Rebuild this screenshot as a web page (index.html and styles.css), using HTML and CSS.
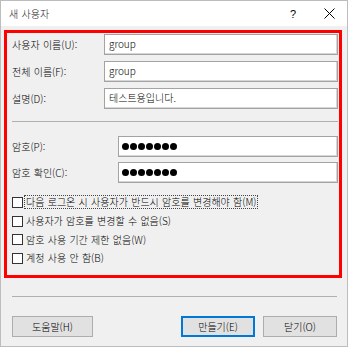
FILE: index.html
```html
<!DOCTYPE html>
<html lang="ko">
<head>
    <meta charset="UTF-8">
    <meta name="viewport" content="width=device-width, initial-scale=1.0">
    <title>새 사용자</title>
    <link rel="stylesheet" href="styles.css">
</head>
<body>
    <div class="window">
        <div class="titlebar">
            <span class="title">새 사용자</span>
            <span class="help">?</span>
            <span class="close">
                <svg width="11" height="11" viewBox="0 0 11 11">
                    <path d="M0.5 0.5 L10.5 10.5 M10.5 0.5 L0.5 10.5" stroke="#000" stroke-width="1" fill="none"/>
                </svg>
            </span>
        </div>
        <div class="body">
            <div class="panel">
                <div class="fields">
                    <label>사용자 이름(U):</label>
                    <div class="input">group</div>
                    <label>전체 이름(F):</label>
                    <div class="input">group</div>
                    <label>설명(D):</label>
                    <div class="input">테스트용입니다.</div>
                </div>
                <div class="sep"></div>
                <div class="fields pw">
                    <label>암호(P):</label>
                    <div class="input dots"><span></span><span></span><span></span><span></span><span></span><span></span><span></span></div>
                    <label>암호 확인(C):</label>
                    <div class="input dots"><span></span><span></span><span></span><span></span><span></span><span></span><span></span></div>
                </div>
                <div class="checks">
                    <div class="check"><span class="box"></span><span class="text focus">다음 로그온 시 사용자가 반드시 암호를 변경해야 함(M)</span></div>
                    <div class="check"><span class="box"></span><span class="text">사용자가 암호를 변경할 수 없음(S)</span></div>
                    <div class="check"><span class="box"></span><span class="text">암호 사용 기간 제한 없음(W)</span></div>
                    <div class="check"><span class="box"></span><span class="text">계정 사용 안 함(B)</span></div>
                </div>
            </div>
            <div class="sep bottom"></div>
            <div class="buttons">
                <button class="btn help-btn">도움말(H)</button>
                <div class="spacer"></div>
                <button class="btn default">만들기(E)</button>
                <button class="btn">닫기(O)</button>
            </div>
        </div>
    </div>
</body>
</html>
```

FILE: styles.css
```css
*{
    margin: 0;
    padding: 0;
    box-sizing: border-box;
}
body{
    background: #fff;
    font-family: "Noto Sans CJK KR", "Noto Sans", sans-serif;
    font-size: 10px;
    font-weight: 300;
    word-spacing: 0.5px;
    color: #000;
}
.window{
    width: 348px;
    height: 347px;
    border: 1px solid #bdbdbd;
    background: #f0f0f0;
}
.titlebar{
    height: 25px;
    background: #fff;
    display: flex;
    align-items: center;
    padding-left: 8px;
}
.title{
    font-size: 10px;
    color: #222;
}
.help{
    margin-left: auto;
    font-family: "Liberation Sans", sans-serif;
    font-size: 11px;
    margin-right: 28px;
}
.close{
    display: flex;
    margin-right: 12px;
}
.body{
    padding: 4px 0 0 3px;
}
.panel{
    width: 338px;
    height: 248px;
    border: 3px solid #ff0000;
    padding: 1px 1px 0 5px;
}
.fields{
    display: grid;
    grid-template-columns: 92px 1fr;
    grid-auto-rows: 21px;
    row-gap: 6px;
    align-items: center;
}
.fields.pw{
    grid-template-columns: 106px 1fr;
    row-gap: 5px;
    margin-top: 14px;
}
.input{
    height: 21px;
    background: #fff;
    border: 1px solid #a3a3a3;
    box-shadow: inset -1px -1px 0 #d6d6d6;
    padding: 0 4px;
    display: flex;
    align-items: center;
    line-height: 1;
    padding-bottom: 2px;
}
.input.dots{
    gap: 1px;
    padding: 0 3px;
}
.input.dots span{
    width: 7px;
    height: 7px;
    border-radius: 50%;
    background: #000;
}
.sep{
    height: 1px;
    background: #b0b0b0;
    margin-top: 12px;
}
.checks{
    margin-top: 10px;
}
.check{
    height: 18.7px;
    display: flex;
    align-items: center;
}
.box{
    width: 11px;
    height: 11px;
    background: #fff;
    border: 1px solid #333;
    margin-right: 1px;
}
.text{
    padding: 0 1px;
    line-height: 12px;
    border: 1px solid transparent;
}
.text.focus{
    border: 1px dotted #444;
}
.sep.bottom{
    margin: 18px 0 0 8px;
    width: 325px;
}
.buttons{
    display: flex;
    margin: 19px 0 0 8px;
    width: 325px;
    gap: 8px;
}
.spacer{
    flex: 1;
}
.btn{
    width: 74px;
    height: 21px;
    background: #e1e1e1;
    border: 1px solid #adadad;
    font-family: "Noto Sans CJK KR", "Noto Sans", sans-serif;
    font-size: 10px;
    font-weight: 300;
    color: #000;
}
.help-btn{
    width: 81px;
}
.btn.default{
    border: 2px solid #0078d7;
}
```
